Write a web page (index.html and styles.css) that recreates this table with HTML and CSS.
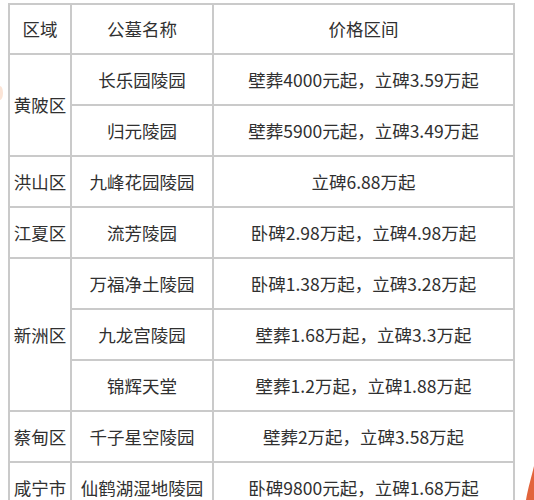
FILE: index.html
```html
<!DOCTYPE html>
<html lang="zh">
<head>
<meta charset="utf-8">
<link rel="stylesheet" href="styles.css">
</head>
<body>
<div class="page">
  <table class="price-table">
    <colgroup>
      <col class="c-area">
      <col class="c-name">
      <col class="c-price">
    </colgroup>
    <thead>
      <tr class="head-row"><th>区域</th><th>公墓名称</th><th>价格区间</th></tr>
    </thead>
    <tbody>
      <tr><td rowspan="2">黄陂区</td><td>长乐园陵园</td><td>壁葬4000元起，立碑3.59万起</td></tr>
      <tr><td>归元陵园</td><td>壁葬5900元起，立碑3.49万起</td></tr>
      <tr><td>洪山区</td><td>九峰花园陵园</td><td>立碑6.88万起</td></tr>
      <tr><td>江夏区</td><td>流芳陵园</td><td>卧碑2.98万起，立碑4.98万起</td></tr>
      <tr><td rowspan="3">新洲区</td><td>万福净土陵园</td><td>卧碑1.38万起，立碑3.28万起</td></tr>
      <tr><td>九龙宫陵园</td><td>壁葬1.68万起，立碑3.3万起</td></tr>
      <tr><td>锦辉天堂</td><td>壁葬1.2万起，立碑1.88万起</td></tr>
      <tr><td>蔡甸区</td><td>千子星空陵园</td><td>壁葬2万起，立碑3.58万起</td></tr>
      <tr><td>咸宁市</td><td>仙鹤湖湿地陵园</td><td>卧碑9800元起，立碑1.68万起</td></tr>
    </tbody>
  </table>
  <span class="smudge"></span>
  <svg class="corner" width="10" height="34" viewBox="0 0 10 34"><path d="M10 0 C8 9 4 22 2 34 L10 34 Z" fill="#e2643c"/></svg>
</div>
</body>
</html>
```
FILE: styles.css
```css
html, body {
  margin: 0;
  padding: 0;
  background: #fff;
}
.page {
  position: relative;
  width: 534px;
  height: 500px;
  overflow: hidden;
  padding: 3px 0 0 8px;
  box-sizing: border-box;
}
.price-table {
  border-collapse: collapse;
  table-layout: fixed;
  width: 505px;
  font-family: "Noto Sans CJK SC", "Noto Sans", sans-serif;
  font-size: 17.5px;
  color: #303030;
}
.c-area { width: 62px; }
.c-name { width: 142px; }
.c-price { width: 301px; }
.price-table th,
.price-table td {
  border: 2px solid #cacaca;
  text-align: center;
  vertical-align: middle;
  padding: 0;
  font-weight: normal;
  white-space: nowrap;
  height: 49px;
  line-height: 24px;
}
.price-table .head-row th {
  height: 48px;
}
.smudge {
  position: absolute;
  left: -3px;
  top: 86px;
  width: 6px;
  height: 14px;
  border-radius: 50%;
  background: #fbe4d6;
}
.corner {
  position: absolute;
  right: 0;
  bottom: 0;
}
```
